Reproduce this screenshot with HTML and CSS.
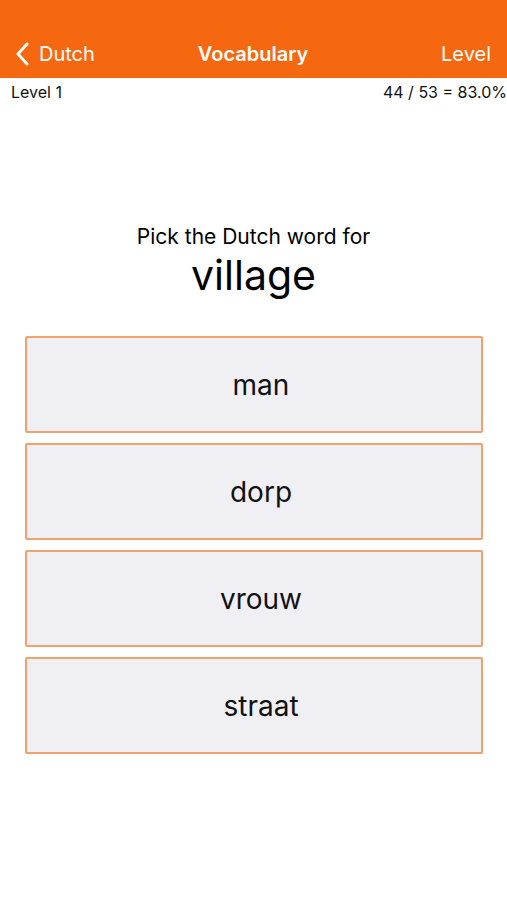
FILE: index.html
```html
<!DOCTYPE html>
<html lang="en">
<head>
    <meta charset="UTF-8">
    <meta name="viewport" content="width=device-width, initial-scale=1.0">
    <title>Vocabulary</title>
    <link rel="stylesheet" href="styles.css">
</head>
<body>
    <div class="header">
        <div class="nav">
            <div class="back">
                <svg width="14" height="24" viewBox="0 0 14 24"><path d="M12 2 L3 12 L12 22" fill="none" stroke="#fff" stroke-width="3" stroke-linecap="round" stroke-linejoin="round"/></svg>
                <span>Dutch</span>
            </div>
            <div class="title">Vocabulary</div>
            <div class="level-link">Level</div>
        </div>
    </div>

    <div class="info">
        <span>Level 1</span>
        <span>44 / 53 = 83.0%</span>
    </div>

    <div class="question">
        <div class="prompt">Pick the Dutch word for</div>
        <div class="word">village</div>
    </div>

    <div class="answers">
        <button class="answer">man</button>
        <button class="answer">dorp</button>
        <button class="answer">vrouw</button>
        <button class="answer">straat</button>
    </div>
</body>
</html>
```

FILE: styles.css
```css
/* ===== General ===== */
body {
    margin: 0;
    background: #fff;
    font-family: Inter, "Liberation Sans", sans-serif;
    color: #000;
}

/* ===== Header ===== */
.header {
    background: #f5680f;
    padding-top: 29px;
}

.nav {
    height: 49px;
    display: flex;
    align-items: center;
    justify-content: space-between;
    padding: 0 16px 0 15px;
    color: #fff;
    font-size: 20px;
}

.back {
    display: flex;
    align-items: center;
    gap: 10px;
    width: 110px;
}

.back svg {
    display: block;
}

.title {
    font-weight: 600;
}

.level-link {
    width: 110px;
    text-align: right;
}

/* ===== Info row ===== */
.info {
    display: flex;
    justify-content: space-between;
    padding: 4px 0 0 11px;
    font-size: 16px;
    color: #111;
}

/* ===== Question ===== */
.question {
    text-align: center;
    margin-top: 122px;
}

.prompt {
    font-size: 21px;
    line-height: 26px;
}

.word {
    font-size: 41px;
    line-height: 50px;
}

/* ===== Answers ===== */
.answers {
    display: flex;
    flex-direction: column;
    gap: 10px;
    margin: 36px 24px 0 25px;
}

.answer {
    height: 97px;
    background: #efeff4;
    border: 2px solid #f2a06c;
    border-radius: 2px;
    font-family: inherit;
    font-size: 28px;
    color: #111;
    padding: 0 0 0 14px;
}
```
